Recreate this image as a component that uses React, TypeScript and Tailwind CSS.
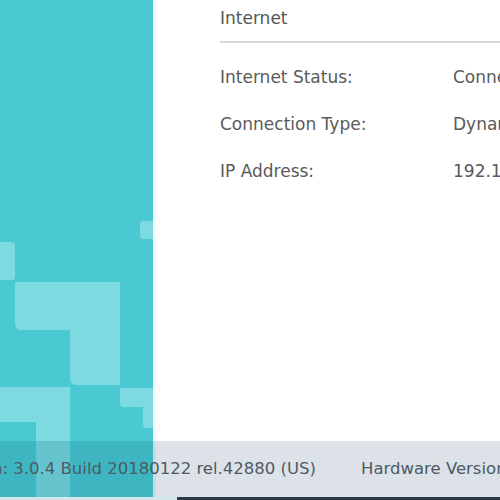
import React from 'react';

const rows = [
  { label: 'Internet Status:', value: 'Connected' },
  { label: 'Connection Type:', value: 'Dynamic IP' },
  { label: 'IP Address:', value: '192.168.0.100' },
];

// light squares on the teal side panel
const tiles = [
  'left-[140px] top-[221px] w-[16px] h-[18px] rounded-[3px]',
  'left-[-4px] top-[242px] w-[19px] h-[38px] rounded-[3px]',
  'left-[15px] top-[282px] w-[105px] h-[48px] rounded-bl-[6px]',
  'left-[70px] top-[282px] w-[50px] h-[103px] rounded-bl-[6px]',
  'left-[-4px] top-[387px] w-[74px] h-[35px]',
  'left-[36px] top-[387px] w-[34px] h-[120px]',
  'left-[120px] top-[388px] w-[36px] h-[19px] rounded-bl-[4px]',
  'left-[143px] top-[388px] w-[13px] h-[40px] rounded-bl-[4px]',
];

export default function App() {
  return (
    <div
      className="relative w-[500px] h-[500px] overflow-hidden bg-white"
      style={{ fontFamily: '"DejaVu Sans", Verdana, sans-serif' }}
    >
      <div className="flex h-[497px]">
        <div className="relative w-[156px] shrink-0 bg-[#4bc9d3] overflow-hidden border-r-[3px] border-[#f2fbfc]">
          {tiles.map((t, i) => (
            <div key={i} className={`absolute bg-[#7edae1] ${t}`} />
          ))}
        </div>
        <div className="min-w-0 flex-1 pl-[64px]">
          <div className="h-[43px] border-b-2 border-[#d8d8d8] pt-[6px] text-[17px] text-[#555]">
            Internet
          </div>
          <div className="flex flex-col gap-[27px] pt-[25px] text-[17px] text-[#5a5a5a]">
            {rows.map((r) => (
              <div key={r.label} className="flex h-[20px] items-center whitespace-nowrap">
                <span className="w-[233px] shrink-0">{r.label}</span>
                <span>{r.value}</span>
              </div>
            ))}
          </div>
        </div>
      </div>

      {/* footer bar laid over both panels */}
      <div className="absolute left-0 top-[441px] flex h-[56px] w-[500px]">
        <div className="w-[156px] bg-[#0b6f80]/20" />
        <div className="flex-1 bg-[#dce2e7]" />
      </div>
      <div className="absolute left-0 top-[441px] flex h-[56px] w-[500px] items-center whitespace-nowrap text-[16.5px] text-[#4c5a64]">
        <div className="flex w-[316px] shrink-0 justify-end">
          <span className="shrink-0">Firmware Version: 3.0.4 Build 20180122 rel.42880 (US)</span>
        </div>
        <span className="ml-[45px] shrink-0">Hardware Version: Archer C7 v4.0</span>
      </div>
      <div className="absolute left-0 top-[497px] flex h-[3px] w-[500px]">
        <div className="w-[177px] bg-[#d3e7ea]" />
        <div className="flex-1 bg-[#2b3a42]" />
      </div>
    </div>
  );
}
